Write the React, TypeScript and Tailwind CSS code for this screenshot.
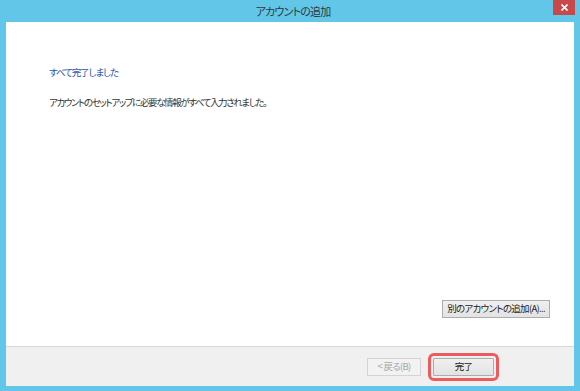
const font = "font-['Noto_Sans_CJK_JP','Noto_Sans',sans-serif] [font-feature-settings:'palt']";

const Button = ({
  children,
  disabled,
  className,
}: {
  children: React.ReactNode;
  disabled?: boolean;
  className?: string;
}) => (
  <button
    disabled={disabled}
    className={
      "flex h-[18px] items-center justify-center border text-[9.5px] leading-none tracking-[-0.7px] whitespace-nowrap " +
      (disabled
        ? "border-[#d4d4d4] bg-[#f2f2f2] text-[#a6a6a6] "
        : "border-[#acacac] bg-gradient-to-b from-[#f0f0f0] to-[#e3e3e3] text-[#222] ") +
      (className ?? "")
    }>
    {children}
  </button>
);

export default function App() {
  return (
    <div className={`flex h-[391px] w-[580px] flex-col bg-[#61c6e7] ${font}`}>
      {/* title bar */}
      <div className="relative flex h-[22px] items-center justify-center">
        <span className="pl-[6px] text-[11px] leading-none tracking-[-0.8px] text-[#2e3a42]">アカウントの追加</span>
        <div className="absolute top-0 right-[5px] flex h-[15px] w-[22px] items-center justify-center bg-[#c9484b]">
          <svg
            width="7"
            height="7"
            viewBox="0 0 7 7"
            stroke="#fff"
            strokeWidth="1.6">
            <path d="M0.5 0.5L6.5 6.5M6.5 0.5L0.5 6.5" />
          </svg>
        </div>
      </div>

      {/* client area */}
      <div className="mx-[6px] mb-[5px] flex flex-1 flex-col bg-white">
        <div className="flex flex-1 flex-col pt-[46px] pr-[24px] pb-[28px] pl-[43px]">
          <h1 className="text-[9.5px] leading-none tracking-[-1.1px] text-[#1f56b0]">すべて完了しました</h1>
          <p className="mt-[20px] text-[9.5px] leading-none tracking-[-1.4px] text-[#333]">
            アカウントのセットアップに必要な情報がすべて入力されました。
          </p>
          <div className="mt-auto flex justify-end">
            <Button className="w-[108px]">別のアカウントの追加(A)...</Button>
          </div>
        </div>

        <div className="flex h-[40px] items-center justify-end gap-[12px] border-t border-[#d6d6d6] bg-[#f0f0f0] pr-[80px]">
          <Button
            disabled
            className="w-[54px]">
            &lt; 戻る(B)
          </Button>
          <Button className="w-[61px] rounded-[1px] outline-[3px] outline-offset-[2px] outline-[#ec5b5e] outline-solid">
            完了
          </Button>
        </div>
      </div>
    </div>
  );
}
